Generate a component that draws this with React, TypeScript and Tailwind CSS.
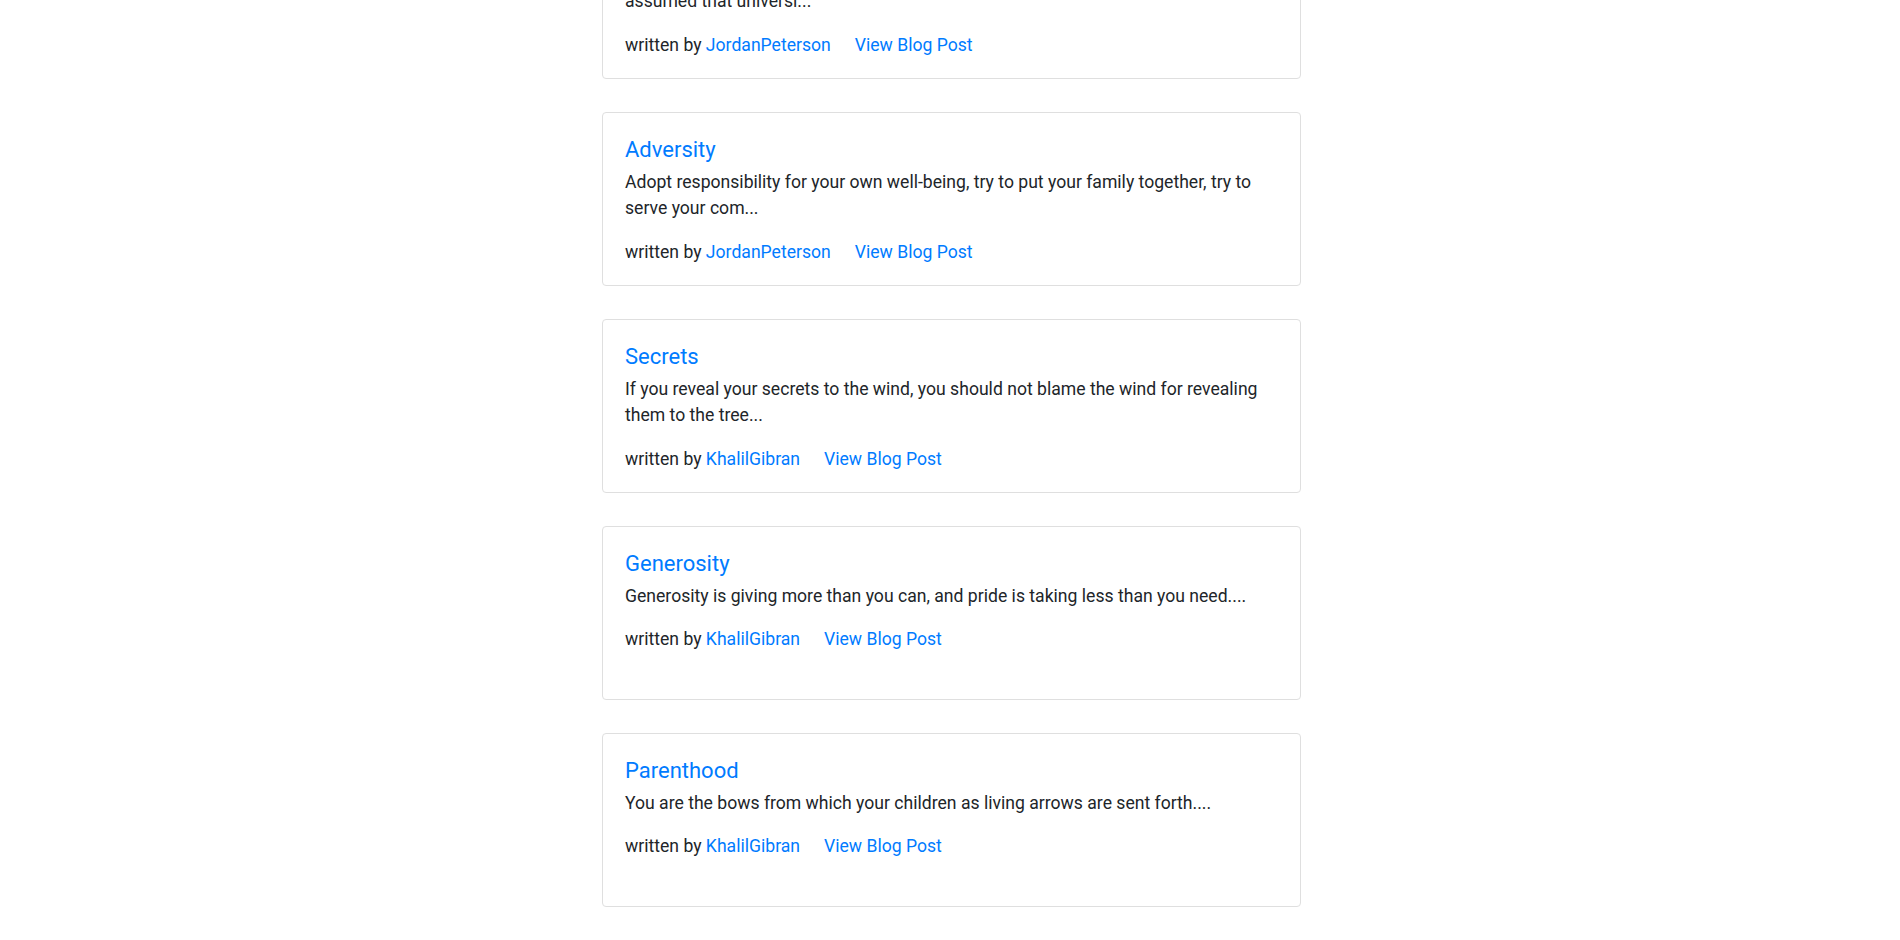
const posts = [
  {
    title: "Responsibility",
    body: "In the absence of a shared framework of meaning, people have too often",
    tail: "assumed that universi...",
    author: "JordanPeterson",
  },
  {
    title: "Adversity",
    body: "Adopt responsibility for your own well-being, try to put your family together, try to",
    tail: "serve your com...",
    author: "JordanPeterson",
  },
  {
    title: "Secrets",
    body: "If you reveal your secrets to the wind, you should not blame the wind for revealing",
    tail: "them to the tree...",
    author: "KhalilGibran",
  },
  {
    title: "Generosity",
    body: "Generosity is giving more than you can, and pride is taking less than you need....",
    tail: "",
    author: "KhalilGibran",
  },
  {
    title: "Parenthood",
    body: "You are the bows from which your children as living arrows are sent forth....",
    tail: "",
    author: "KhalilGibran",
  },
];

const PostCard = ({ post }: { post: typeof posts[number] }) => (
  <div className="border border-[#dfdfdf] rounded-[4px] px-[22px] pt-[23px] pb-[20px] min-h-[174px] bg-white">
    <h5 className="text-[22px] leading-[27px] text-[#007bff] font-normal mb-[5.5px]">{post.title}</h5>
    <p className="text-[17.6px] leading-[26.5px] text-[#212529] mb-[17px]">
      {post.body}
      {post.tail && <br />}
      {post.tail}
    </p>
    <div className="flex text-[17.6px] leading-[26.4px] text-[#212529]">
      <span>
        written by <a className="text-[#007bff]">{post.author}</a>
      </span>
      <a className="text-[#007bff] ml-[24px]">View Blog Post</a>
    </div>
  </div>
);

export default function App() {
  return (
    <div className="h-[940px] overflow-hidden bg-white flex justify-center pl-[3px]" style={{ fontFamily: '"Segoe UI", Roboto, "Noto Sans", sans-serif' }}>
      <div className="w-[699px] mt-[-95px] flex flex-col gap-[33px]">
        {posts.map(post => (
          <PostCard key={post.title} post={post} />
        ))}
      </div>
    </div>
  );
}
